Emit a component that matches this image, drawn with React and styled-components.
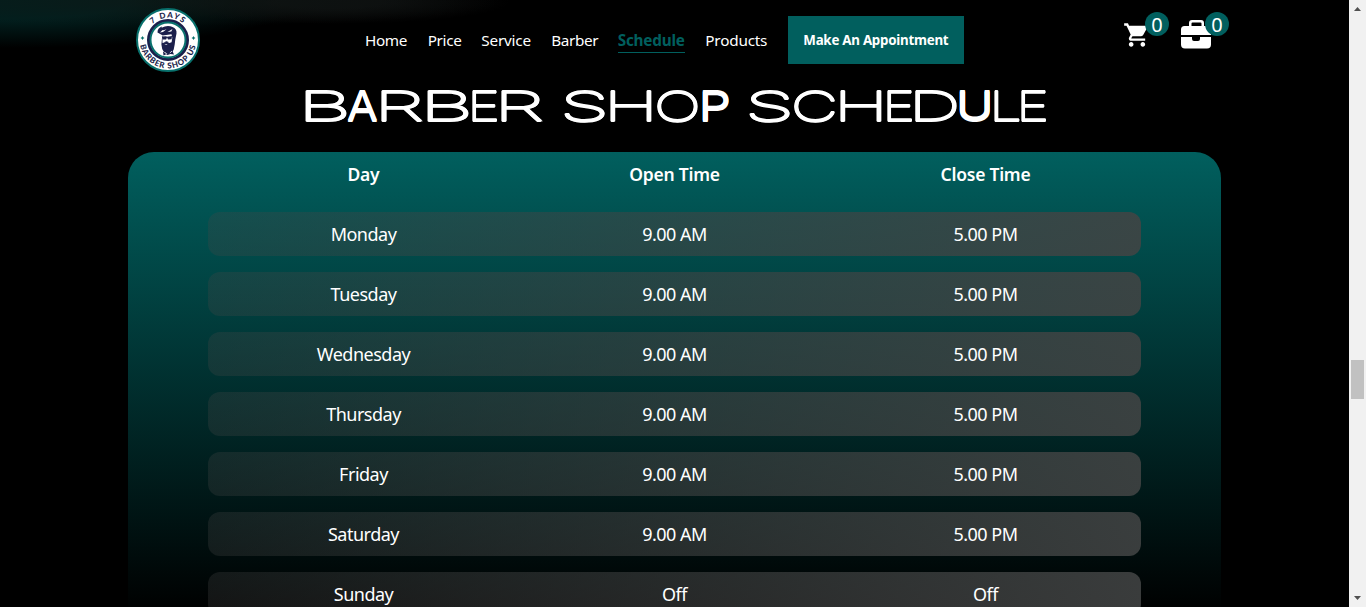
import React from "react";
import styled, { createGlobalStyle } from "styled-components";
import { MdShoppingCart } from "react-icons/md";

const Global = createGlobalStyle`
  * { box-sizing: border-box; }
  html, body { margin: 0; background: #000; overflow: hidden; }
`;

const Page = styled.div`
  display: flex;
  width: 1366px;
  height: 607px;
  overflow: hidden;
  background: #000;
  color: #fff;
  font-family: "Noto Sans", "Open Sans", sans-serif;
`;

const Content = styled.main`
  width: 1349px;
  height: 607px;
  overflow: hidden;
  background:
    radial-gradient(ellipse 330px 24px at 170px 2px, rgba(14, 23, 21, 0.7), transparent),
    radial-gradient(ellipse 180px 22px at 330px 2px, rgba(13, 14, 14, 1) 30%, transparent) 0 0 / 100% 40px no-repeat,
    radial-gradient(ellipse 300px 48px at 10px 0, #021f1e 40%, transparent) 0 0 / 100% 80px no-repeat,
    #000;
`;

const Header = styled.header`
  display: flex;
  align-items: center;
  height: 80px;
  padding-left: 136px;
`;

const Logo = styled.svg`
  width: 64px;
  height: 64px;
  flex: none;
`;

const Nav = styled.nav`
  display: flex;
  align-items: center;
  margin-left: 165px;
`;

const NavLink = styled.a`
  width: ${(p) => p.$w}px;
  margin-right: 20px;
  height: 25px;
  line-height: 25px;
  font-size: 15.3px;
  white-space: nowrap;
  letter-spacing: ${(p) => p.$ls}px;
  font-weight: ${(p) => (p.$active ? 700 : 400)};
  color: ${(p) => (p.$active ? "#015f5e" : "#fff")};
  border-bottom: 1px solid ${(p) => (p.$active ? "#015f5e" : "transparent")};
`;

const BookButton = styled.button`
  width: 176px;
  height: 48px;
  padding: 0;
  border: 0;
  background: #015f5e;
  color: #fff;
  font: 700 13.33px "Noto Sans", sans-serif;
  letter-spacing: -0.25px;
  white-space: nowrap;
`;

const Actions = styled.div`
  display: flex;
  margin-left: 158px;
  gap: 12px;
`;

const Action = styled.div`
  position: relative;
  width: 48px;
  height: 56px;
  svg { display: block; }
`;

const CartIcon = styled(MdShoppingCart)`
  width: 28px;
  height: 28px;
  margin: 9px 0 0 1px;
`;

const CaseIcon = styled.svg`
  width: 30px;
  height: 29px;
  margin: 8px 0 0 -1px;
`;

const Badge = styled.span`
  position: absolute;
  top: 0;
  right: 1px;
  width: 24px;
  height: 24px;
  border-radius: 50%;
  background: #015f5e;
  font-size: 20px;
  line-height: 26px;
  text-align: center;
`;

const Title = styled.h1`
  display: flex;
  height: 52px;
  margin: 0 0 20px 305px;
  font: 300 41px/52px "Inter", sans-serif;
  text-shadow: 0 0.9px 0 #fff, 0 -0.9px 0 #fff;
`;

const TitleWord = styled.span`
  display: flex;
  margin-right: 21px;
  white-space: nowrap;
`;

const Letter = styled.span`
  width: ${(p) => p.$w}px;
  font-weight: ${(p) => (p.$scale > 1.3 ? 200 : 400)};
  -webkit-text-stroke: ${(p) => (p.$scale > 1.3 ? 0.7 : 0)}px #fff;
  transform: scaleX(${(p) => p.$scale}) translateX(-${(p) => p.$bearing}em);
  transform-origin: left center;
`;

const Card = styled.section`
  width: 1093px;
  height: 520px;
  margin-left: 128px;
  padding: 0 80px;
  border-radius: 26px;
  background: linear-gradient(180deg, #015f5e 0, #000 460px);
`;

const Row = styled.div`
  display: grid;
  grid-template-columns: repeat(3, 1fr);
  height: 44px;
  margin-bottom: 16px;
  border-radius: 12px;
  line-height: 45px;
  font-size: 18px;
  text-align: center;
  letter-spacing: -0.5px;
  background: linear-gradient(100deg, rgba(70, 70, 70, 0.28), rgba(66, 68, 68, 0.88));
`;

const HeadRow = styled(Row)`
  font-weight: 600;
  font-size: 17.5px;
  letter-spacing: -0.25px;
  background: none;
`;

const Scrollbar = styled.aside`
  display: flex;
  flex-direction: column;
  align-items: center;
  width: 17px;
  height: 607px;
  background: #f1f1f1;
`;

const Arrow = styled.svg`
  width: 17px;
  height: 17px;
  flex: none;
  transform: ${(p) => (p.$down ? "rotate(180deg)" : "none")};
`;

const Track = styled.div`
  flex: 1;
  padding-top: 343px;
`;

const Thumb = styled.div`
  width: 13px;
  height: 39px;
  background: #c1c1c1;
`;

const links = [
  ["Home", 42.7, -0.4],
  ["Price", 33.6, -0.35],
  ["Service", 50, -0.2],
  ["Barber", 46.4, -0.4],
  ["Schedule", 67.6, -0.2],
  ["Products", 62.6, -0.2],
];

const days = ["Monday", "Tuesday", "Wednesday", "Thursday", "Friday", "Saturday", "Sunday"];

// Extended display lettering: [ink width in em, left bearing in em, drawn width in px]
const letterShapes = {
  A: [0.64, 0.025, 29],
  B: [0.5, 0.09, 42],
  C: [0.63, 0.055, 42],
  D: [0.57, 0.09, 42],
  E: [0.44, 0.09, 25],
  H: [0.56, 0.09, 42],
  L: [0.42, 0.09, 25],
  O: [0.66, 0.055, 42],
  P: [0.49, 0.09, 25],
  R: [0.51, 0.09, 42],
  S: [0.52, 0.055, 42],
  U: [0.56, 0.085, 29],
};

const titleWords = [
  ["BARBER", [43, 33, 46, 45, 29, 42]],
  ["SHOP", [46, 47, 46, 25]],
  ["SCHEDULE", [45, 46, 47, 28, 45, 34, 27, 25]],
];

function ShopLogo() {
  return (
    <Logo viewBox="0 0 64 64">
      <defs>
        <path id="arcTop" d="M9.7 32a22.3 22.3 0 0 1 44.6 0" />
        <path id="arcBottom" d="M3.7 32a28.3 28.3 0 0 0 56.6 0" />
      </defs>
      <circle cx="32" cy="32" r="31" fill="#fff" stroke="#08706c" strokeWidth="2" />
      <circle cx="32" cy="32" r="19.5" fill="#fff" stroke="#1b1f4b" strokeWidth="3" />
      <circle cx="32" cy="32" r="17.500" fill="none" stroke="#08706c" strokeWidth="2" />
      <g fill="#1b1f4b" fontFamily="Lato, sans-serif" fontWeight="900" fontSize="8" textAnchor="middle">
        <text letterSpacing="1.3"><textPath href="#arcTop" startOffset="50%">7 DAYS</textPath></text>
        <text letterSpacing=".8"><textPath href="#arcBottom" startOffset="50%">BARBER SHOP US</textPath></text>
      </g>
      <path d="M6.500 28l.7 1.3 1.3.7-1.3.7-.7 1.3-.7-1.3-1.3-.7 1.3-.7zM57.500 28l.7 1.3 1.3.7-1.3.7-.7 1.3-.7-1.3-1.3-.7 1.3-.7z" fill="#08706c" />
      <path d="M21.500 24.500q-.2-4.500 4.500-6l-.5 1.200q6-3 11-.7 4.500 1.800 4 6.500l-1.200 6-.6 5-1 5q-2.200 4.500-5.500 4.300-4.300-.8-6-4.800l-.8-4.500.6-6.500.8-2.500z" fill="#1b1f4b" />
      <path d="M26.500 27.500l9-1.200.8 3.500-.7 4.500-2.300.8-2.500-1.300-2.800 1-1.500.2zM24 24.500q4-.3 6.500-3.200-3 1-4 .8zM31.500 24l5-3-1.200 2.500zM28.300 36.500l3.400-.4-1.500 1z" fill="#fff" />
      <path d="M25.800 28.600l4.300-.4.8.5 5.100-.8-.4 3.300-3.500.2-1.100-1.800-.9 1.800-3.500.2zM27.500 34.500l2.800-1.300 2.500.8-2 .8zM27 43.500l3.700 2.300L36 42l2 4.500-3.500-.5-3 1-1.300-.8-2.700 1.300z" fill="#1b1f4b" />
      <path d="M33.800 45l2.200-2M28.700 44l1.700 2" stroke="#fff" strokeWidth=".8" />
    </Logo>
  );
}

export default function App() {
  return (
    <Page>
      <Global />
      <Content>
        <Header>
          <ShopLogo />
          <Nav>
            {links.map(([name, w, ls]) => (
              <NavLink key={name} $w={w} $ls={ls} $active={name === "Schedule"}>{name}</NavLink>
            ))}
            <BookButton>Make An Appointment</BookButton>
          </Nav>
          <Actions>
            <Action>
              <CartIcon />
              <Badge>0</Badge>
            </Action>
            <Action>
              <CaseIcon viewBox="0 0 30 29" fill="#fff">
                <path fillRule="evenodd" d="M8 6V3q0-3 3-3h9q3 0 3 3v3h3.500q3.500 0 3.500 3.500V15H0V9.500Q0 6 3.500 6zm2.500 0h10V3.500q0-1-1-1h-8q-1 0-1 1z" />
                <path d="M0 17h11v2q0 2 2 2h4q2 0 2-2v-2h11v7.500q0 4-4 4H4q-4 0-4-4z" />
              </CaseIcon>
              <Badge>0</Badge>
            </Action>
          </Actions>
        </Header>
        <Title>
          {titleWords.map(([word, advances]) => (
            <TitleWord key={word}>
              {word.split("").map((ch, i) => {
                const [ink, bearing, drawn] = letterShapes[ch];
                return (
                  <Letter key={i} $w={advances[i]} $bearing={bearing} $scale={drawn / (ink * 41)}>{ch}</Letter>
                );
              })}
            </TitleWord>
          ))}
        </Title>
        <Card>
          <HeadRow>
            <span>Day</span>
            <span>Open Time</span>
            <span>Close Time</span>
          </HeadRow>
          {days.map((day) => (
            <Row key={day}>
              <span>{day}</span>
              <span>{day === "Sunday" ? "Off" : "9.00 AM"}</span>
              <span>{day === "Sunday" ? "Off" : "5.00 PM"}</span>
            </Row>
          ))}
        </Card>
      </Content>
      <Scrollbar>
        <Arrow viewBox="0 0 17 17"><path d="M5 11h7L8.500 7z" fill="#505050" /></Arrow>
        <Track><Thumb /></Track>
        <Arrow $down viewBox="0 0 17 17"><path d="M5 11h7L8.500 7z" fill="#505050" /></Arrow>
      </Scrollbar>
    </Page>
  );
}
